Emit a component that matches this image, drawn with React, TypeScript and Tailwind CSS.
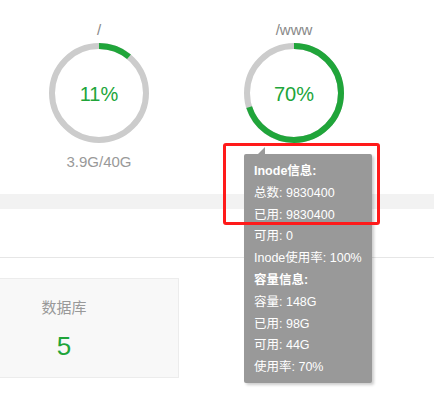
import React from 'react';

const GREEN = '#20a53a';

function Ring({ percent }: { percent: number }) {
  const r = 47;
  const c = 2 * Math.PI * r;
  return (
    <div className="relative w-[100px] h-[100px]">
      <svg width="100" height="100" viewBox="0 0 100 100" className="-rotate-90">
        <circle cx="50" cy="50" r={r} fill="none" stroke="#cccccc" strokeWidth="6" />
        <circle
          cx="50"
          cy="50"
          r={r}
          fill="none"
          stroke={GREEN}
          strokeWidth="6"
          strokeDasharray={`${(c * percent) / 100} ${c}`}
        />
      </svg>
      <div className="absolute inset-0 flex items-center justify-center text-[20px] text-[#20a53a] pt-[2px]">
        {percent}%
      </div>
    </div>
  );
}

function DiskItem({ path, percent, size }: { path: string; percent: number; size?: string }) {
  return (
    <div className="flex flex-col items-center w-[100px]">
      <div className="h-[20px] leading-[20px] text-[15px] text-[#888]">{path}</div>
      <div className="mt-[3px]">
        <Ring percent={percent} />
      </div>
      <div className="h-[20px] leading-[20px] mt-[9px] text-[15px] text-[#999]">{size}</div>
    </div>
  );
}

const tipLines: { text: string; bold?: boolean }[] = [
  { text: 'Inode信息:', bold: true },
  { text: '总数: 9830400' },
  { text: '已用: 9830400' },
  { text: '可用: 0' },
  { text: 'Inode使用率: 100%' },
  { text: '容量信息:', bold: true },
  { text: '容量: 148G' },
  { text: '已用: 98G' },
  { text: '可用: 44G' },
  { text: '使用率: 70%' },
];

export default function App() {
  return (
    <div
      className="relative w-[434px] h-[395px] overflow-hidden bg-white"
      style={{ fontFamily: '"Liberation Sans", "Noto Sans CJK SC", sans-serif' }}
    >
      {/* disks */}
      <div className="h-[194px] pt-[20px] flex pl-[49px] gap-[95px]">
        <DiskItem path="/" percent={11} size="3.9G/40G" />
        <DiskItem path="/www" percent={70} />
      </div>

      <div className="h-[15px] bg-[#f2f2f2]" />
      <div className="h-[49px] border-b border-[#e6e6e6]" />

      {/* stats */}
      <div className="pt-[20px] flex">
        <div className="-ml-[51px] w-[230px] h-[100px] bg-[#f8f8f8] border border-[#ececec] flex flex-col items-center">
          <div className="mt-[19px] text-[15px] leading-[20px] text-[#999]">数据库</div>
          <div className="mt-[13px] text-[26px] leading-[30px] text-[#20a53a]">5</div>
        </div>
      </div>

      {/* tooltip */}
      <div className="absolute left-[244px] top-[154px] w-[128px] bg-[#999] text-white text-[12.5px] leading-[21.8px] pl-[10px] pt-[7px] pb-[4px] rounded-[2px] shadow-[2px_2px_3px_rgba(0,0,0,0.2)]">
        <div className="absolute -top-[7px] left-[14px] w-0 h-0 border-l-[7px] border-l-transparent border-b-[7px] border-b-[#999]" />
        {tipLines.map((l, i) => (
          <div key={i} className={l.bold ? 'font-bold' : ''}>
            {l.text}
          </div>
        ))}
      </div>

      {/* highlight box */}
      <div className="absolute left-[223px] top-[143px] w-[157px] h-[82px] border-[3px] border-[#ff1a1a] rounded-[3px]" />
    </div>
  );
}
